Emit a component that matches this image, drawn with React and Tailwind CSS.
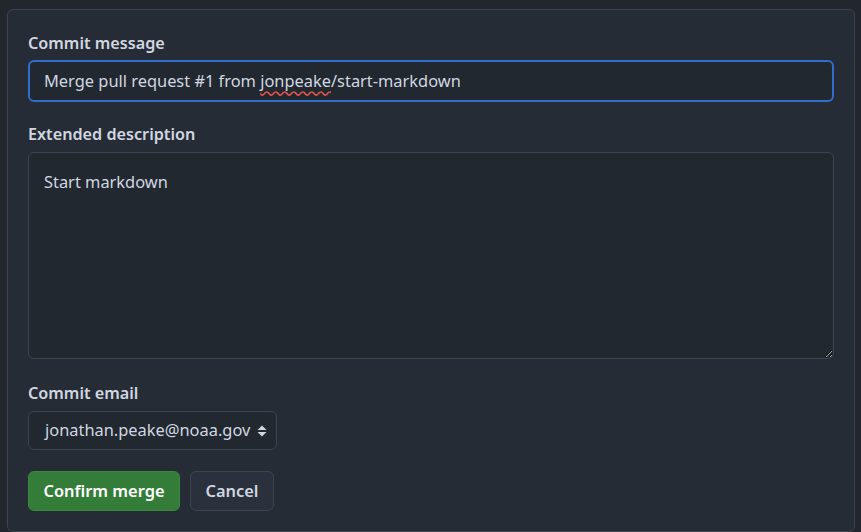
import React from "react";

function Label({ children, className = "mb-[6px]" }) {
  return (
    <div className={`text-[16.2px] font-semibold text-[#d1d7e0] leading-6 ${className}`}>
      {children}
    </div>
  );
}

export default function App() {
  return (
    <div
      className="w-[861px] h-[532px] overflow-hidden bg-[#22272e] pl-[7px] pt-[9px]"
      style={{ fontFamily: '"Noto Sans", "Open Sans", sans-serif' }}
    >
      <div className="w-[848px] h-[523px] bg-[#262c36] border border-[#3d444d] rounded-md px-5 pt-[21px]">
        <Label className="mb-[5px]">Commit message</Label>
        <div className="h-[42px] w-[806px] rounded-md border-2 border-[#316dca] bg-[#212830] flex items-center px-[14px] text-[16.4px] text-[#d1d7e0]">
          <span>
            Merge pull request #1 from{" "}
            <span className="underline decoration-wavy decoration-[#e5534b] underline-offset-4">
              jonpeake
            </span>
            /start-markdown
          </span>
        </div>

        <div className="mt-[20px]">
          <Label>Extended description</Label>
          <textarea
            defaultValue="Start markdown"
            spellCheck={false}
            className="block h-[207px] w-[806px] rounded-md border border-[#3d444d] bg-[#212830] px-[15px] py-[17px] text-[16.4px] text-[#d1d7e0] outline-none"
          />
        </div>

        <div className="mt-[22px]">
          <Label>Commit email</Label>
          <div className="h-[39px] w-[249px] rounded-md border border-[#3d444d] bg-[#212830] flex items-center pl-4 pr-[9px] text-[16.4px] text-[#d1d7e0]">
            <span className="flex-1">jonathan.peake@noaa.gov</span>
            <svg width="10" height="14" viewBox="0 0 10 14" fill="#d1d7e0">
              <path d="M5 1.5 L9.5 6 H0.5 Z" />
              <path d="M5 12.5 L9.5 8 H0.5 Z" />
            </svg>
          </div>
        </div>

        <div className="mt-[21px] flex gap-[10px]">
          <button className="h-10 w-[152px] rounded-md bg-[#347d39] border border-[#3b8640] text-white text-[16.4px] font-semibold">
            Confirm merge
          </button>
          <button className="h-10 w-[84px] rounded-md bg-[#2a313c] border border-[#3d444d] text-[#d1d7e0] text-[16.4px] font-semibold">
            Cancel
          </button>
        </div>
      </div>
    </div>
  );
}
